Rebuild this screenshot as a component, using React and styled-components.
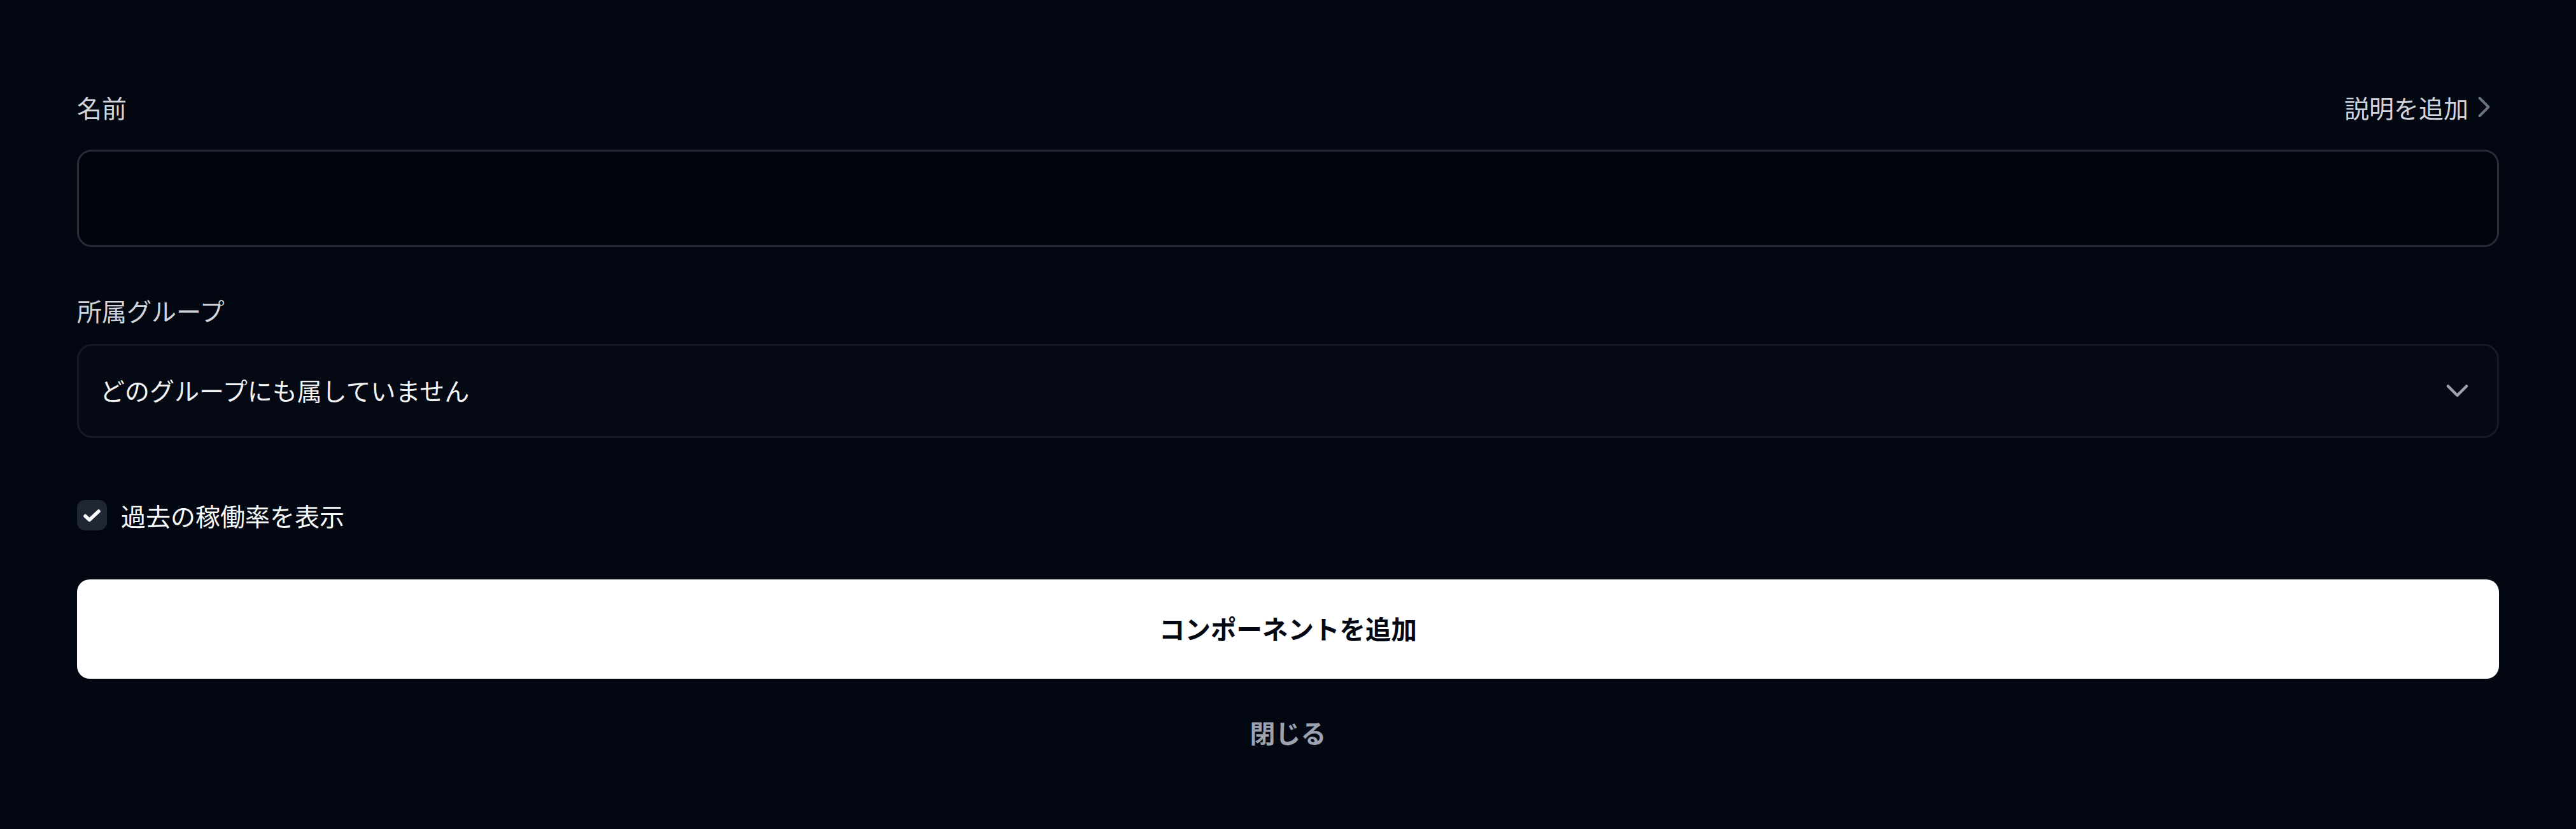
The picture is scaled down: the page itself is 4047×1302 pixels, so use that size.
import React from "react";
import styled, { createGlobalStyle } from "styled-components";

const GlobalStyle = createGlobalStyle`
  html, body {
    margin: 0;
    padding: 0;
    background: #030712;
  }
  body {
    font-family: "Noto Sans CJK JP", "Noto Sans", sans-serif;
    -webkit-font-smoothing: antialiased;
  }
`;

const Page = styled.div`
  min-height: 1302px;
  box-sizing: border-box;
  padding: 142px 121px 0;
  background: #030712;
  display: flex;
  flex-direction: column;
`;

const LabelRow = styled.div`
  display: flex;
  align-items: center;
  justify-content: space-between;
  height: 52px;
  margin-top: ${(p) => p.$top || 0}px;
  margin-bottom: ${(p) => p.$bottom || 0}px;
`;

const Label = styled.label`
  font-size: 39px;
  line-height: 52px;
  color: #d1d5db;
`;

const LinkButton = styled.button`
  display: flex;
  align-items: center;
  gap: 14px;
  padding: 0 12px 0 0;
  border: 0;
  background: none;
  font-family: inherit;
  font-size: 39px;
  line-height: 52px;
  color: #d1d5db;
  cursor: pointer;

  svg {
    display: block;
  }
`;

const TextInput = styled.input`
  box-sizing: border-box;
  width: 100%;
  height: 153px;
  padding: 0 33px;
  border: 3px solid #262c39;
  border-radius: 23px;
  background: #01040b;
  font-family: inherit;
  font-size: 39px;
  color: #f3f4f6;
  outline: none;
`;

const Select = styled.div`
  box-sizing: border-box;
  display: flex;
  align-items: center;
  justify-content: space-between;
  height: 148px;
  padding: 0 45px 4px 33px;
  border: 3px solid #151a26;
  border-radius: 24px;
  background: #050913;
  font-size: 39px;
  color: #f3f4f6;
  cursor: pointer;

  svg {
    display: block;
    margin-top: 4px;
  }
`;

const CheckRow = styled.label`
  display: flex;
  align-items: center;
  gap: 22px;
  height: 48px;
  margin-top: 97px;
  font-size: 39px;
  line-height: 52px;
  color: #f9fafb;
  cursor: pointer;
`;

const CheckBox = styled.span`
  display: flex;
  align-items: center;
  justify-content: center;
  width: 47px;
  height: 48px;
  border-radius: 13px;
  background: #1f2735;
  flex-shrink: 0;
`;

const PrimaryButton = styled.button`
  height: 156px;
  margin-top: 77px;
  padding-bottom: 4px;
  border: 0;
  border-radius: 20px;
  background: #ffffff;
  font-family: inherit;
  font-size: 40.5px;
  font-weight: 700;
  color: #030712;
  cursor: pointer;
`;

const GhostButton = styled.button`
  align-self: center;
  height: 52px;
  margin-top: 58px;
  padding: 0 20px;
  border: 0;
  background: none;
  font-family: inherit;
  font-size: 40px;
  line-height: 52px;
  font-weight: 700;
  color: #9ca3af;
  cursor: pointer;
`;

const ChevronRight = () => (
  <svg width="22" height="34" viewBox="0 0 22 34" fill="none">
    <path
      d="M3.5 3 L17.5 17 L3.5 31"
      stroke="#6b7280"
      strokeWidth="4"
      strokeLinecap="round"
      strokeLinejoin="round"
    />
  </svg>
);

const ChevronDown = () => (
  <svg width="35" height="22" viewBox="0 0 35 22" fill="none">
    <path
      d="M3 3.5 L17.5 18 L32 3.5"
      stroke="#9ca3af"
      strokeWidth="4.5"
      strokeLinecap="round"
      strokeLinejoin="round"
    />
  </svg>
);

const Check = () => (
  <svg width="47" height="48" viewBox="0 0 47 48" fill="none">
    <path
      d="M13 25.5 L19.5 31.5 L34 18"
      stroke="#ffffff"
      strokeWidth="5.5"
      strokeLinecap="round"
      strokeLinejoin="round"
    />
  </svg>
);

const App = () => {
  return (
    <>
      <GlobalStyle />
      <Page>
        <LabelRow $bottom={41}>
          <Label htmlFor="name">名前</Label>
          <LinkButton type="button">
            説明を追加
            <ChevronRight />
          </LinkButton>
        </LabelRow>
        <TextInput id="name" type="text" />

        <LabelRow $top={73} $bottom={27}>
          <Label>所属グループ</Label>
        </LabelRow>
        <Select>
          <span>どのグループにも属していません</span>
          <ChevronDown />
        </Select>

        <CheckRow>
          <CheckBox>
            <Check />
          </CheckBox>
          過去の稼働率を表示
        </CheckRow>

        <PrimaryButton type="button">コンポーネントを追加</PrimaryButton>
        <GhostButton type="button">閉じる</GhostButton>
      </Page>
    </>
  );
};

export default App;
